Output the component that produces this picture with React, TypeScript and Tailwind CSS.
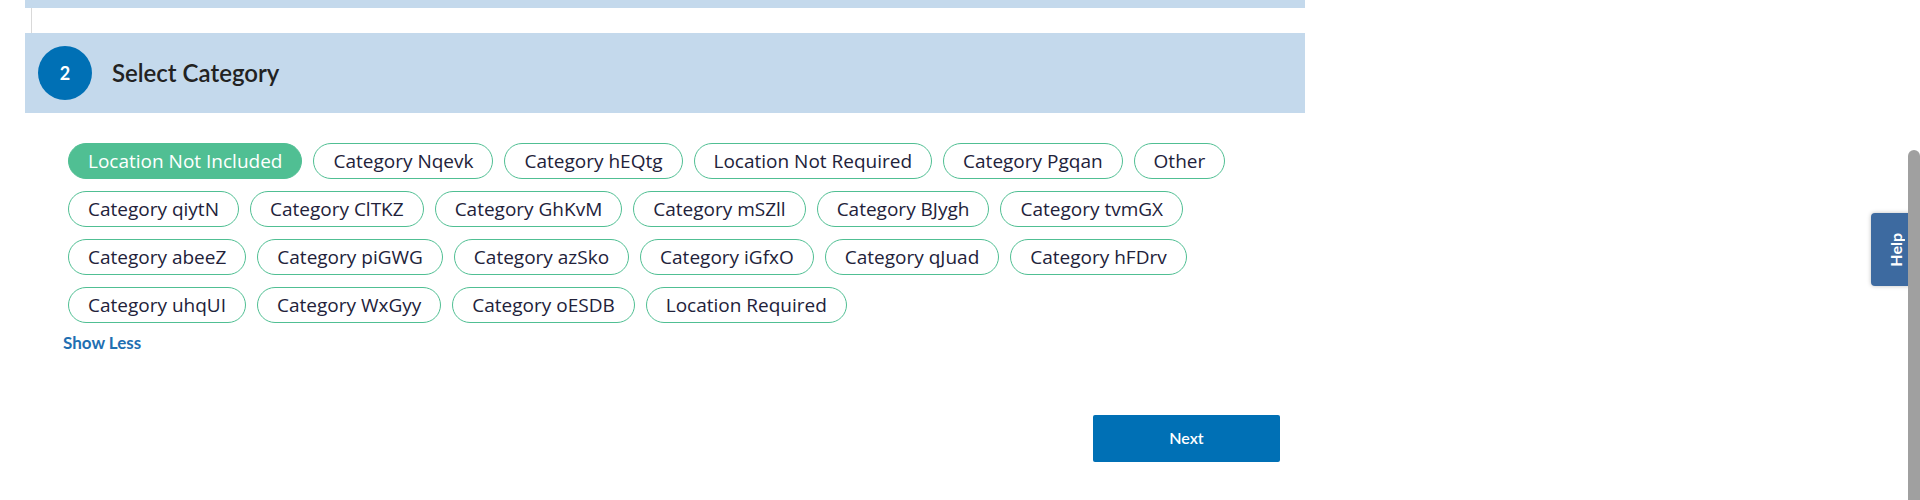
const categories = [
  'Location Not Included',
  'Category Nqevk',
  'Category hEQtg',
  'Location Not Required',
  'Category Pgqan',
  'Other',
  'Category qiytN',
  'Category ClTKZ',
  'Category GhKvM',
  'Category mSZll',
  'Category BJygh',
  'Category tvmGX',
  'Category abeeZ',
  'Category piGWG',
  'Category azSko',
  'Category iGfxO',
  'Category qJuad',
  'Category hFDrv',
  'Category uhqUI',
  'Category WxGyy',
  'Category oESDB',
  'Location Required',
]

function Chip({ label, selected }: { label: string; selected: boolean }) {
  return (
    <button
      type="button"
      className={
        selected
          ? 'flex h-[36px] items-center rounded-full border border-[#50bf93] bg-[#50bf93] px-[19px] font-["Open_Sans",sans-serif] text-[19px] text-white'
          : 'flex h-[36px] items-center rounded-full border border-[#50bf93] bg-white px-[19px] font-["Open_Sans",sans-serif] text-[19px] text-[#22223a]'
      }
    >
      {label}
    </button>
  )
}

export default function App() {
  const selected = 'Location Not Included'

  return (
    <div className="relative h-[500px] w-full overflow-hidden bg-white font-['Lato',sans-serif]">
      <div className="ml-[25px] w-[1280px]">
        <div className="h-2 bg-[#c4d9ec]" />
        <div className="ml-[6px] h-[25px] w-px bg-[#d9d9d9]" />

        <div className="flex h-20 items-center bg-[#c4d9ec] pl-[13px]">
          <div className="flex h-[54px] w-[54px] items-center justify-center rounded-full bg-[#0070b5] text-[18px] font-bold text-white">
            2
          </div>
          <div className="ml-[20px] text-[24px] font-semibold text-[#222]">Select Category</div>
        </div>

        <div className="pl-[43px] pr-[43px] pt-[30px]">
          <div className="flex flex-wrap gap-x-[11px] gap-y-3">
            {categories.map((c) => (
              <Chip key={c} label={c} selected={c === selected} />
            ))}
          </div>
          <button type="button" className="-ml-[5px] mt-[7px] text-[17px] font-bold text-[#1f6fb2]">
            Show Less
          </button>
        </div>

        <div className="mt-[59px] flex justify-end pr-[25px]">
          <button
            type="button"
            className="flex h-[47px] w-[187px] items-center justify-center rounded-[2px] bg-[#0070b5] text-[16px] font-semibold text-white"
          >
            Next
          </button>
        </div>
      </div>

      {/* help tab + scrollbar thumb sit over the page edge */}
      <div className="absolute left-[1871px] top-[213px] flex h-[73px] w-[49px] items-center justify-center rounded-l-[4px] bg-[#3d6aa0] shadow-[0_0_4px_rgba(0,0,0,0.25)]">
        <span className="rotate-180 text-[16px] font-bold text-white [writing-mode:vertical-rl]">Help</span>
      </div>
      <div className="absolute left-[1908px] top-[150px] h-[350px] w-[12px] rounded-t-full bg-[#a0a0a0]" />
    </div>
  )
}
